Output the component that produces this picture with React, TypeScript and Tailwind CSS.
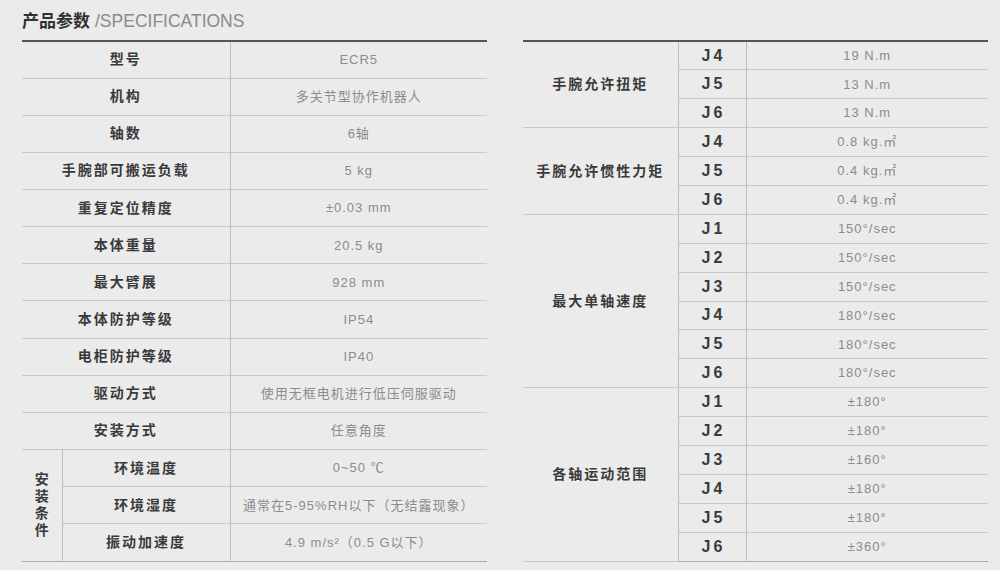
import React from 'react';

const left: [string, string][] = [
  ['型号', 'ECR5'],
  ['机构', '多关节型协作机器人'],
  ['轴数', '6轴'],
  ['手腕部可搬运负载', '5 kg'],
  ['重复定位精度', '±0.03 mm'],
  ['本体重量', '20.5 kg'],
  ['最大臂展', '928 mm'],
  ['本体防护等级', 'IP54'],
  ['电柜防护等级', 'IP40'],
  ['驱动方式', '使用无框电机进行低压伺服驱动'],
  ['安装方式', '任意角度'],
];

const install: [string, string][] = [
  ['环境温度', '0~50 ℃'],
  ['环境湿度', '通常在5-95%RH以下（无结露现象）'],
  ['振动加速度', '4.9 m/s²（0.5 G以下）'],
];

const right: { name: string; rows: [string, string][] }[] = [
  { name: '手腕允许扭矩', rows: [['J4', '19 N.m'], ['J5', '13 N.m'], ['J6', '13 N.m']] },
  { name: '手腕允许惯性力矩', rows: [['J4', '0.8 kg.㎡'], ['J5', '0.4 kg.㎡'], ['J6', '0.4 kg.㎡']] },
  {
    name: '最大单轴速度',
    rows: [['J1', '150°/sec'], ['J2', '150°/sec'], ['J3', '150°/sec'], ['J4', '180°/sec'], ['J5', '180°/sec'], ['J6', '180°/sec']],
  },
  {
    name: '各轴运动范围',
    rows: [['J1', '±180°'], ['J2', '±180°'], ['J3', '±160°'], ['J4', '±180°'], ['J5', '±180°'], ['J6', '±360°']],
  },
];

const font = { fontFamily: '"Liberation Sans", "Noto Sans CJK SC", sans-serif' };

const labelCls = 'text-[14px] font-bold text-[#3a3a3a] tracking-[2px] text-center';
const valueCls = 'text-[13px] text-[#8c8c8c] tracking-[1px] text-center';

export default function App() {
  return (
    <div className="w-[1000px] h-[570px] bg-[#ebebeb] pl-[22px] pr-[12px] pt-[8px] overflow-hidden" style={font}>
      <div className="flex items-baseline gap-[5px] h-[26px]">
        <span className="text-[17px] font-bold text-[#333]">产品参数</span>
        <span className="text-[17.5px] text-[#8a8a8a]">/SPECIFICATIONS</span>
      </div>
      <div className="flex gap-[36px] mt-[6px]">
        <table className="w-[465px] border-collapse border-t-2 border-t-[#555] border-b border-b-[#aaa]">
          <colgroup>
            <col className="w-[40px]" />
            <col className="w-[168px]" />
            <col />
          </colgroup>
          <tbody>
            {left.map(([k, v]) => (
              <tr key={k} className="h-[37.1px] border-b border-[#c9c9c9]">
                <td colSpan={2} className={`${labelCls} border-r border-r-[#bdbdbd]`}>{k}</td>
                <td className={valueCls}>{v}</td>
              </tr>
            ))}
            {install.map(([k, v], i) => (
              <tr key={k} className={`h-[37.1px] ${i < install.length - 1 ? 'border-b border-[#c9c9c9]' : ''}`}>
                {i === 0 && (
                  <td rowSpan={3} className="border-r border-r-[#bdbdbd] text-center align-middle">
                    <div className="flex flex-col items-center text-[14px] font-bold text-[#3a3a3a] leading-[17px]">
                      <span>安</span>
                      <span>装</span>
                      <span>条</span>
                      <span>件</span>
                    </div>
                  </td>
                )}
                <td className={`${labelCls} border-r border-r-[#bdbdbd]`}>{k}</td>
                <td className={valueCls}>{v}</td>
              </tr>
            ))}
          </tbody>
        </table>

        <table className="w-[465px] border-collapse border-t-2 border-t-[#555] border-b border-b-[#aaa]">
          <colgroup>
            <col className="w-[155px]" />
            <col className="w-[68px]" />
            <col />
          </colgroup>
          <tbody>
            {right.map((g, gi) =>
              g.rows.map(([j, v], i) => (
                <tr
                  key={g.name + j}
                  className={`h-[28.9px] ${
                    gi === right.length - 1 && i === g.rows.length - 1 ? '' : 'border-b border-[#c9c9c9]'
                  }`}
                >
                  {i === 0 && (
                    <td rowSpan={g.rows.length} className={`${labelCls} tracking-[2.5px] border-b border-b-[#c9c9c9] border-r border-r-[#bdbdbd]`}>
                      {g.name}
                    </td>
                  )}
                  <td className="text-[16px] font-bold text-[#3a3a3a] tracking-[3px] text-center border-r border-r-[#bdbdbd] pl-[3px]">
                    {j}
                  </td>
                  <td className={valueCls}>{v}</td>
                </tr>
              ))
            )}
          </tbody>
        </table>
      </div>
    </div>
  );
}
